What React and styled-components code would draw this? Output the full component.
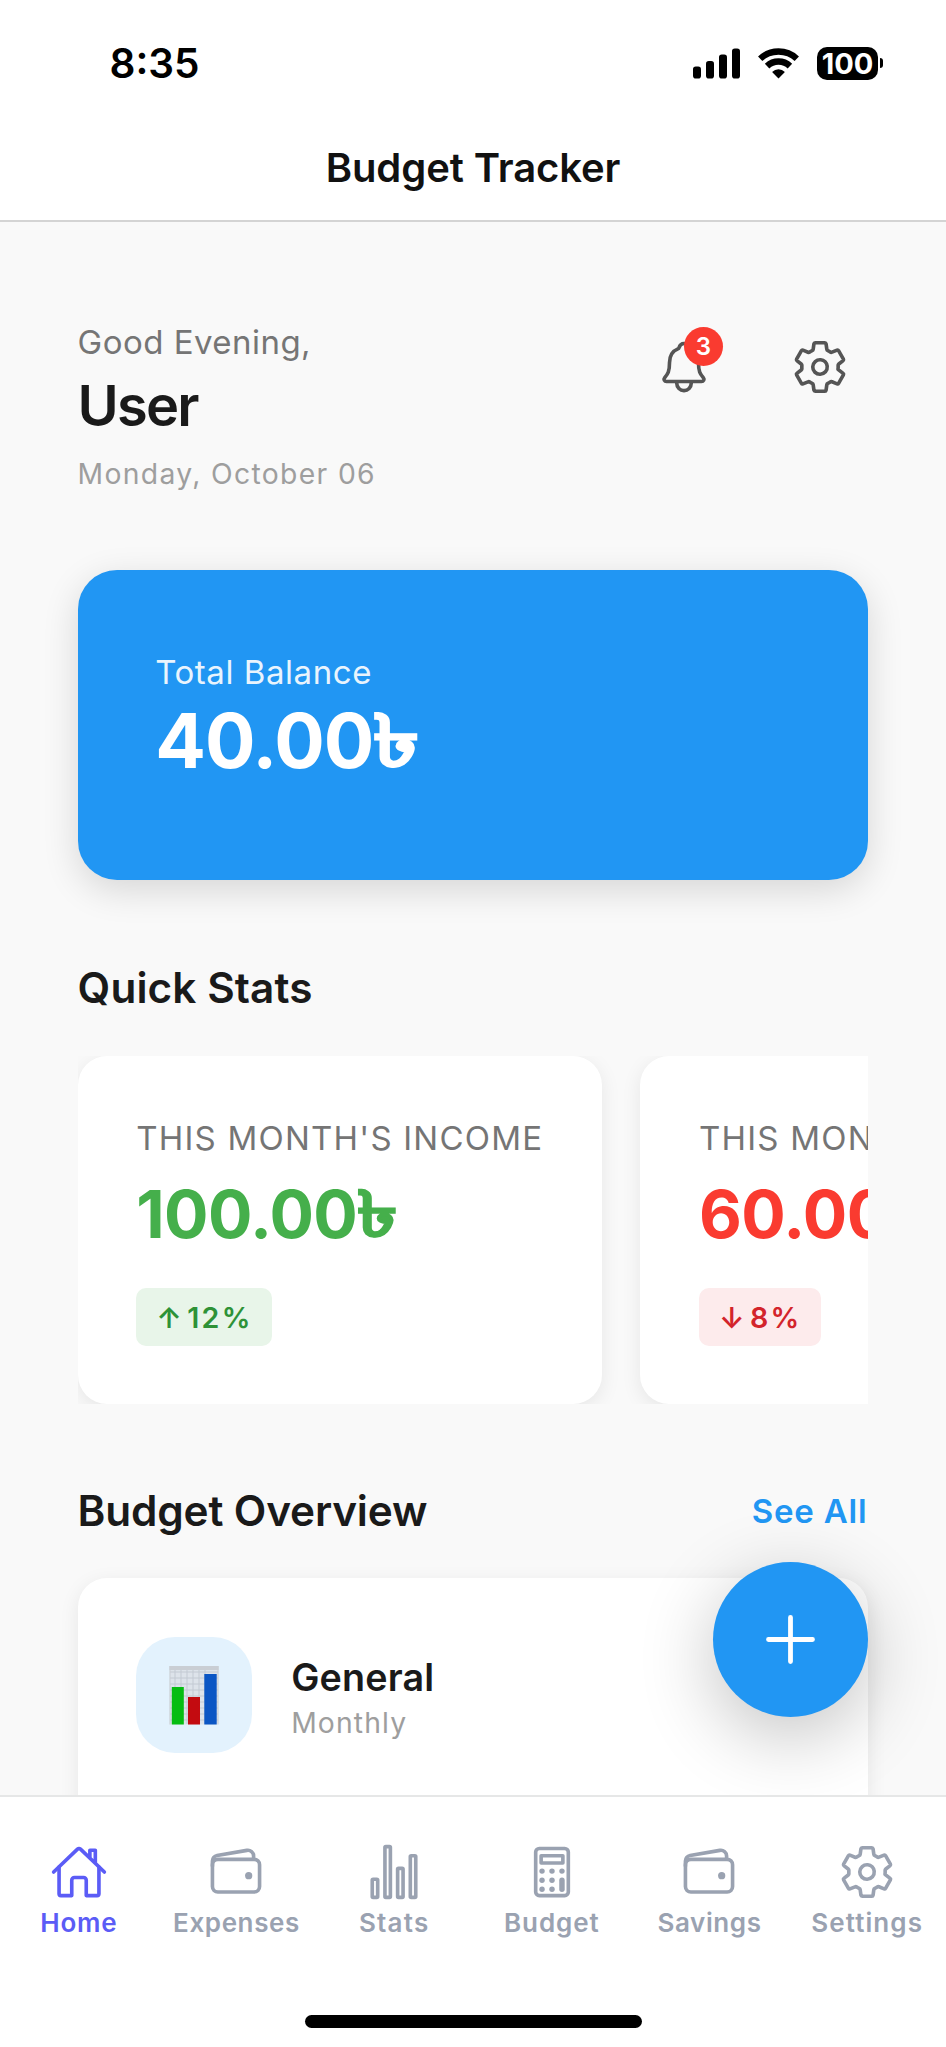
import React from "react";
import styled, { createGlobalStyle } from "styled-components";
import {
  IoHomeOutline,
  IoWalletOutline,
  IoStatsChartOutline,
  IoCalculatorOutline,
  IoSettingsOutline,
  IoNotificationsOutline,
} from "react-icons/io5";

const GlobalStyle = createGlobalStyle`
  * { box-sizing: border-box; }
  body { margin: 0; background: #fff; }
`;

const Screen = styled.div`
  width: 946px;
  height: 2047px;
  display: flex;
  flex-direction: column;
  overflow: hidden;
  background: #f9f9f9;
  color: #1a1a1a;
  font-family: Inter, "Liberation Sans", sans-serif;
  white-space: nowrap;
`;

/* Status bar and title */
const TopBar = styled.header`
  flex: none;
  height: 222px;
  background: #fff;
  border-bottom: 2px solid #d4d4d4;
`;

const StatusBar = styled.div`
  height: 126px;
  padding: 0 63px 0 109.5px;
  display: flex;
  align-items: center;
  justify-content: space-between;
`;

const Clock = styled.span`
  font-size: 40.5px;
  font-weight: 600;
  color: #000;
`;

const StatusIcons = styled.div`
  display: flex;
  align-items: center;
  color: #000;
`;

const Signal = styled.svg`
  width: 47px;
  height: 31px;
  margin-right: 18px;
`;

const Wifi = styled.svg`
  width: 41px;
  height: 31px;
  margin-right: 18px;
`;

const Battery = styled.div`
  width: 61px;
  height: 33px;
  border-radius: 10px;
  background: #000;
  color: #fff;
  font-size: 29px;
  font-weight: 700;
  line-height: 33px;
  text-align: center;
`;

const BatteryNub = styled.span`
  width: 3px;
  height: 10px;
  margin-left: 2px;
  border-radius: 0 4px 4px 0;
  background: #000;
`;

const Title = styled.h1`
  margin: 13px 0 0;
  font-size: 40px;
  font-weight: 600;
  line-height: 58px;
  letter-spacing: -0.1px;
  text-align: center;
  color: #111;
`;

/* Scrolled content */
const Content = styled.main`
  position: relative;
  flex: 1;
  min-height: 0;
  padding: 97px 77.6px 0;
  overflow: hidden;
`;

const Welcome = styled.section`
  display: flex;
  justify-content: space-between;
  align-items: flex-start;
  height: 251px;
`;

const Greeting = styled.div`
  padding-top: 1px;
  font-size: 33px;
  line-height: 44px;
  letter-spacing: 0.47px;
  color: #757575;
`;

const UserName = styled.div`
  margin-top: 9px;
  font-size: 56px;
  font-weight: 600;
  line-height: 67px;
  letter-spacing: -1.8px;
`;

const Today = styled.div`
  margin-top: 15px;
  font-size: 28.3px;
  line-height: 38px;
  letter-spacing: 1.33px;
  color: #9e9e9e;
`;

const Actions = styled.div`
  display: flex;
  gap: 39px;
`;

const IconButton = styled.button`
  position: relative;
  display: flex;
  align-items: center;
  justify-content: center;
  width: 97px;
  height: 96px;
  padding: 0;
  border: 0;
  background: none;
  color: #555;
  font-family: inherit;
  font-size: 58px;
`;

const Count = styled.span`
  position: absolute;
  top: 8px;
  right: 9.5px;
  width: 39px;
  height: 39px;
  border-radius: 50%;
  background: #fa3b30;
  color: #fff;
  font-size: 24px;
  font-weight: 600;
  line-height: 39px;
  text-align: center;
`;

const BalanceCard = styled.section`
  height: 310px;
  padding: 80px 77.6px 0;
  border-radius: 39px;
  background: #2196f3;
  color: #fff;
  box-shadow: 0 10px 36px rgba(0, 0, 0, 0.14);
`;

const BalanceLabel = styled.div`
  font-size: 33px;
  line-height: 44px;
  letter-spacing: 0.56px;
  opacity: 0.9;
`;

const BalanceAmount = styled.div`
  margin-top: 5px;
  font-size: 75px;
  font-weight: 700;
  line-height: 84px;
  letter-spacing: -1px;
`;

const TakaSign = styled.span`
  display: inline-block;
  line-height: 1;
  letter-spacing: 0;
  transform: translateY(-0.01em) scale(1.24, 0.96);
  transform-origin: left center;
  -webkit-text-stroke: 0.02em currentColor;
`;

const SectionHead = styled.div`
  display: flex;
  justify-content: space-between;
  align-items: center;
  height: 54px;
  margin: ${({ $top }) => $top}px 0 ${({ $bottom }) => $bottom}px;
`;

const SectionTitle = styled.h2`
  margin: 0;
  font-size: 42.3px;
  font-weight: 600;
  line-height: 54px;
  letter-spacing: ${({ $tracking = 0 }) => $tracking}px;
`;

const SeeAll = styled.a`
  margin-right: 1px;
  font-size: 33px;
  font-weight: 600;
  letter-spacing: 0.8px;
  color: #2196f3;
`;

const StatStrip = styled.div`
  display: flex;
  gap: 38.8px;
  overflow: hidden;
`;

const StatCard = styled.article`
  flex: none;
  width: 524px;
  height: 348px;
  padding: 60px 58.6px 0;
  border-radius: 29px;
  background: #fff;
  box-shadow: 0 5px 20px rgba(0, 0, 0, 0.08);
`;

const StatLabel = styled.div`
  font-size: 33px;
  line-height: 44px;
  letter-spacing: 1.22px;
  color: #757575;
`;

const StatAmount = styled.div`
  margin-top: 14px;
  font-size: 66px;
  font-weight: 700;
  line-height: 80px;
  letter-spacing: -0.6px;
  color: ${({ $down }) => ($down ? "#fa3b30" : "#45af4b")};
`;

const Trend = styled.div`
  display: inline-flex;
  align-items: center;
  gap: 9px;
  height: 58px;
  margin-top: 34px;
  padding: 0 19.5px 0 20px;
  border-radius: 10px;
  background: ${({ $down }) => ($down ? "#fdebec" : "#e8f5e9")};
  color: ${({ $down }) => ($down ? "#d3242b" : "#2e9237")};
  font-size: 28.6px;
  font-weight: 600;
  letter-spacing: 2.3px;
`;

const TrendArrow = styled.span`
  width: 22px;
  font-size: 29px;
  letter-spacing: 0;
  text-align: center;
`;

const BudgetCard = styled.article`
  display: flex;
  gap: 39px;
  height: 300px;
  padding: 59px 58.2px;
  border-radius: 29px;
  background: #fff;
  box-shadow: 0 5px 20px rgba(0, 0, 0, 0.08);
`;

const BudgetIcon = styled.div`
  display: flex;
  align-items: center;
  justify-content: center;
  width: 116.4px;
  height: 116.4px;
  border-radius: 39px;
  background: #e3f2fd;
`;

const BudgetName = styled.div`
  margin-top: 17px;
  font-size: 37.7px;
  font-weight: 600;
  line-height: 46px;
  letter-spacing: 0.15px;
`;

const BudgetPeriod = styled.div`
  margin-top: 4px;
  font-size: 28.3px;
  line-height: 38px;
  letter-spacing: 1.13px;
  color: #9e9e9e;
`;

const AddButton = styled.button`
  position: absolute;
  right: 77.6px;
  bottom: 78px;
  display: flex;
  align-items: center;
  justify-content: center;
  width: 155.3px;
  height: 155.3px;
  padding: 0;
  border: 0;
  border-radius: 50%;
  background: #2196f3;
  box-shadow: 0 19px 76px rgba(0, 0, 0, 0.24);
`;

/* Bottom navigation */
const BottomBar = styled.footer`
  flex: none;
  display: flex;
  flex-direction: column;
  justify-content: space-between;
  align-items: center;
  height: 252px;
  padding: 46px 0 19px;
  border-top: 2px solid #e6e7e7;
  background: #fff;
`;

const Tabs = styled.nav`
  display: grid;
  grid-template-columns: repeat(6, 1fr);
  width: 100%;
`;

const Tab = styled.a`
  display: flex;
  flex-direction: column;
  align-items: center;
  gap: 6px;
  color: ${({ $active }) => ($active ? "#5b5cf6" : "#9aa2b1")};
  font-size: 26px;
  font-weight: 560;
  line-height: 32px;
  letter-spacing: ${({ $tracking }) => $tracking}px;

  svg {
    width: 58px;
    height: 58px;
  }
`;

const HomeIndicator = styled.div`
  width: 337px;
  height: 13px;
  border-radius: 7px;
  background: #000;
`;

const tabs = [
  { label: "Home", Icon: IoHomeOutline, active: true, tracking: 0.8 },
  { label: "Expenses", Icon: IoWalletOutline, tracking: 0.6 },
  { label: "Stats", Icon: IoStatsChartOutline, tracking: 1.2 },
  { label: "Budget", Icon: IoCalculatorOutline, tracking: 0.9 },
  { label: "Savings", Icon: IoWalletOutline, tracking: 0.6 },
  { label: "Settings", Icon: IoSettingsOutline, tracking: 1.1 },
];

const stats = [
  { label: "THIS MONTH'S INCOME", amount: "100.00", trend: "12%" },
  { label: "THIS MONTH'S EXPENSES", amount: "60.00", trend: "8%", down: true },
];

function SignalIcon() {
  return (
    <Signal viewBox="0 0 47 31" fill="currentColor">
      <rect x="0" y="18.5" width="8" height="12" rx="2.8" />
      <rect x="13" y="13" width="8" height="17.5" rx="2.8" />
      <rect x="26" y="6.5" width="8" height="24" rx="2.8" />
      <rect x="39" y="0.5" width="8" height="30" rx="2.8" />
    </Signal>
  );
}

function WifiIcon() {
  return (
    <Wifi viewBox="0 0 41 31" fill="none" stroke="currentColor">
      <path d="M2.2 10.7A26.8 26.8 0 0 1 38.8 10.7" strokeWidth="6.3" />
      <path d="M9.1 18.1A16.5 16.5 0 0 1 31.9 18.1" strokeWidth="6.5" />
      <path d="M20.5 30.4L14.1 23.9A9.3 9.3 0 0 1 26.9 23.9Z" fill="currentColor" stroke="none" />
    </Wifi>
  );
}

function ChartPicture() {
  return (
    <svg width="50" height="59" viewBox="0 0 50 59">
      <rect x="0.5" y="0" width="49" height="58.5" fill="#dde3ea" />
      <path
        d="M1 6H49M1 12H49M1 18H49M1 24H49M1 30H49M1 36H49M1 42H49M1 48H49M1 54H49M6 0V58M12 0V58M18 0V58M24 0V58M30 0V58M36 0V58"
        stroke="#c3cad3"
        strokeWidth="1"
      />
      <path d="M0.5 2H49.5" stroke="#c9ced4" strokeWidth="4" />
      <path d="M1 0V58.5M49 0V58.5" stroke="#c9ced4" strokeWidth="1" />
      <rect x="2.8" y="21" width="12" height="37.5" fill="#06bd12" />
      <rect x="19" y="31" width="12" height="27.5" fill="#c30b10" />
      <rect x="35.3" y="8" width="12.4" height="50.5" fill="#0b56c4" />
    </svg>
  );
}

export default function App() {
  return (
    <Screen>
      <GlobalStyle />
      <TopBar>
        <StatusBar>
          <Clock>8:35</Clock>
          <StatusIcons>
            <SignalIcon />
            <WifiIcon />
            <Battery>100</Battery>
            <BatteryNub />
          </StatusIcons>
        </StatusBar>
        <Title>Budget Tracker</Title>
      </TopBar>

      <Content>
        <Welcome>
          <div>
            <Greeting>Good Evening,</Greeting>
            <UserName>User</UserName>
            <Today>Monday, October 06</Today>
          </div>
          <Actions>
            <IconButton aria-label="Notifications">
              <IoNotificationsOutline />
              <Count>3</Count>
            </IconButton>
            <IconButton aria-label="Settings">
              <IoSettingsOutline />
            </IconButton>
          </Actions>
        </Welcome>

        <BalanceCard>
          <BalanceLabel>Total Balance</BalanceLabel>
          <BalanceAmount>
            40.00<TakaSign>৳</TakaSign>
          </BalanceAmount>
        </BalanceCard>

        <SectionHead $top={81} $bottom={41}>
          <SectionTitle $tracking={0.1}>Quick Stats</SectionTitle>
        </SectionHead>
        <StatStrip>
          {stats.map(({ label, amount, trend, down }) => (
            <StatCard key={label}>
              <StatLabel>{label}</StatLabel>
              <StatAmount $down={down}>
                {amount}
                <TakaSign>৳</TakaSign>
              </StatAmount>
              <Trend $down={down}>
                <TrendArrow>{down ? "↓" : "↑"}</TrendArrow>
                {trend}
              </Trend>
            </StatCard>
          ))}
        </StatStrip>

        <SectionHead $top={80} $bottom={40}>
          <SectionTitle $tracking={-0.15}>Budget Overview</SectionTitle>
          <SeeAll>See All</SeeAll>
        </SectionHead>
        <BudgetCard>
          <BudgetIcon>
            <ChartPicture />
          </BudgetIcon>
          <div>
            <BudgetName>General</BudgetName>
            <BudgetPeriod>Monthly</BudgetPeriod>
          </div>
        </BudgetCard>

        <AddButton aria-label="Add">
          <svg width="49" height="49" viewBox="0 0 49 49" stroke="#fff" strokeWidth="4.8" strokeLinecap="round">
            <path d="M24.5 2.5V46.5M2.5 24.5H46.5" />
          </svg>
        </AddButton>
      </Content>

      <BottomBar>
        <Tabs>
          {tabs.map(({ label, Icon, active, tracking }) => (
            <Tab key={label} $active={active} $tracking={tracking}>
              <Icon />
              {label}
            </Tab>
          ))}
        </Tabs>
        <HomeIndicator />
      </BottomBar>
    </Screen>
  );
}
